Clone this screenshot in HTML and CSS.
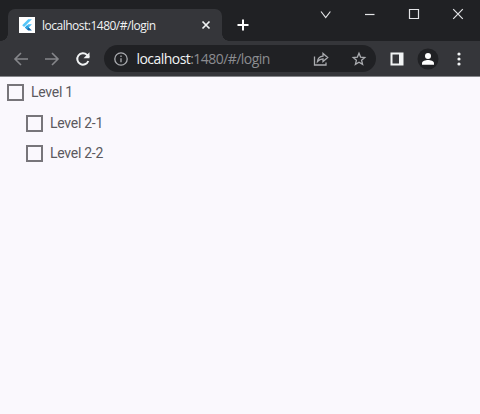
FILE: index.html
```html
<!DOCTYPE html>
<html lang="en">
<head>
<meta charset="utf-8">
<title>localhost:1480/#/login</title>
<link rel="stylesheet" href="styles.css">
</head>
<body>
<header class="titlebar">
  <div class="tab">
    <svg class="favicon" viewBox="0 0 16 16"><path fill="#fff" d="M0 0h16v16H0z"/><path fill="#54c5f8" d="M9.200 2.300h3.700L5.100 10.100 3.200 8.200z"/><path fill="#45bdf4" d="M9.200 7.200h3.700L9.700 10.400 7.900 8.600z"/><path fill="#1769aa" d="M6 10.400l1.900-1.900 5 5H9.200z"/><path fill="#29a8ea" d="M6 10.400l1.900-1.900 1.900 1.900-1.900 1.900z"/></svg>
    <span class="tab-title">localhost:1480/#/login</span>
    <svg class="tab-close" viewBox="0 0 10 10"><path d="M1.500 1.500l7 7m0-7l-7 7"/></svg>
  </div>
  <svg class="new-tab" viewBox="0 0 12 12"><path d="M6 .5v11M.5 6h11"/></svg>
  <div class="window-controls">
    <svg viewBox="0 0 12 12"><path d="M1 3.500l4.700 6 4.700-6"/></svg>
    <svg viewBox="0 0 12 12"><path d="M1 6.500h9.500"/></svg>
    <svg viewBox="0 0 12 12"><path d="M1.500 1.500h9v9h-9z"/></svg>
    <svg viewBox="0 0 12 12"><path d="M1.200 1.200l9.600 9.600m0-9.600l-9.600 9.600"/></svg>
  </div>
</header>
<nav class="toolbar">
  <div class="navigation">
    <svg class="dim" viewBox="0 0 16 16"><path d="M15 8H2m6-6L2 8l6 6"/></svg>
    <svg class="dim" viewBox="0 0 16 16"><path d="M1 8h13M8 2l6 6-6 6"/></svg>
    <svg class="reload" viewBox="0 0 16 16"><path d="M13.300 10A5.700 5.700 0 1 1 12 3.900L14 6"/><path class="solid" d="M14.500 1.200v6H8.500z"/></svg>
  </div>
  <div class="address">
    <svg class="info" viewBox="0 0 16 16"><circle cx="8" cy="8" r="6.200"/><path d="M8 7.200v4M8 4.500v1.600"/></svg>
    <span class="url"><b>localhost</b>:1480/#/login</span>
    <svg class="share" viewBox="0 0 16 16"><path d="M1.500 5.500v8.500h11.500v-2.500M4.500 10.500c.4-3.300 2-5 5.500-5.300V2.500l4.700 4-4.700 4V7.900C7.500 8 6 8.800 4.500 10.500z"/></svg>
    <svg class="star" viewBox="0 0 16 16"><path d="M8 2.200l1.600 3.900 4.200.4-3.200 2.800 1 4.100L8 11.200l-3.600 2.200 1-4.100-3.200-2.800 4.200-.4z"/></svg>
  </div>
  <svg class="panel" viewBox="0 0 14 14"><path fill="#f1f3f4" fill-rule="evenodd" d="M.5.500h13v13H.5zM2.500 2.500v9H9v-9z"/></svg>
  <svg class="avatar" viewBox="0 0 22 22"><circle cx="11" cy="11" r="10.500" fill="#202124"/><circle cx="11" cy="8" r="3" fill="#fff"/><path fill="#fff" d="M5 16.800v-1.500c0-2.200 3.500-3.300 6-3.300s6 1.100 6 3.300v1.500z"/></svg>
  <svg class="menu" viewBox="0 0 4 16"><circle cx="2" cy="3" r="1.600"/><circle cx="2" cy="8" r="1.600"/><circle cx="2" cy="13" r="1.600"/></svg>
</nav>
<main class="tree">
  <label class="node"><span class="box"></span>Level 1</label>
  <label class="node child"><span class="box"></span>Level 2-1</label>
  <label class="node child"><span class="box"></span>Level 2-2</label>
</main>
</body>
</html>
```
FILE: styles.css
```css
* { box-sizing: border-box; }
body {
  margin: 0;
  height: 414px;
  overflow: hidden;
  background: #faf8fd;
  font-family: "Open Sans", "Noto Sans", sans-serif;
}
svg { display: block; flex: none; fill: none; stroke: none; }
.titlebar {
  display: flex;
  height: 41px;
  padding-left: 8px;
  background: #202124;
}
.tab {
  position: relative;
  display: flex;
  align-items: center;
  width: 214px;
  height: 32px;
  margin-top: 9px;
  padding: 0 11px;
  border-radius: 7px 7px 0 0;
  background: #35363a;
}
.tab::before, .tab::after {
  content: "";
  position: absolute;
  bottom: 0;
  width: 7px;
  height: 7px;
}
.tab::before { left: -7px; background: radial-gradient(circle at 0 0, #202124 6.500px, #35363a 7px); }
.tab::after { right: -7px; background: radial-gradient(circle at 100% 0, #202124 6.500px, #35363a 7px); }
.favicon { width: 16px; height: 16px; }
.tab-title {
  flex: 1;
  margin-left: 7px;
  color: #f1f3f4;
  font-size: 12px;
  font-weight: 500;
  letter-spacing: -.5px;
  white-space: nowrap;
}
.tab-close { width: 10px; height: 10px; stroke: #f1f3f4; stroke-width: 1.700; }
.new-tab { width: 12px; height: 12px; margin: 19px 0 0 15px; stroke: #fff; stroke-width: 2; }
.window-controls {
  display: flex;
  gap: 32px;
  margin: 8px 16px 0 auto;
}
.window-controls svg { width: 12px; height: 12px; stroke: #e4e5e7; stroke-width: 1.200; }
.toolbar {
  display: flex;
  align-items: center;
  height: 36px;
  padding-left: 13px;
  border-bottom: 1px solid #85868a;
  background: #35363a;
}
.navigation { display: flex; gap: 15px; }
.navigation svg { width: 16px; height: 16px; stroke: #f1f3f4; }
.navigation .dim { stroke: #85868a; stroke-width: 1.600; }
.navigation .reload { stroke-width: 2; }
.navigation .solid { fill: #f1f3f4; stroke: none; }
.address {
  display: flex;
  align-items: center;
  width: 272px;
  height: 27px;
  margin-left: 13px;
  padding: 0 9px;
  border-radius: 14px;
  background: #202124;
}
.address svg { width: 16px; height: 16px; stroke: #aaacb0; stroke-width: 1.300; }
.url {
  flex: 1;
  margin-left: 7.500px;
  color: #8b8c90;
  font-size: 14px;
  letter-spacing: -.55px;
  white-space: nowrap;
}
.url b { color: #f1f3f4; font-weight: 500; }
.star { margin-left: 22px; }
.panel { width: 14px; height: 14px; margin-left: 14px; }
.avatar { width: 22px; height: 22px; margin-left: 13px; }
.menu { width: 4px; height: 16px; margin-left: 18px; fill: #f1f3f4; }
.tree {
  padding: 0 7px;
  color: #5b595e;
  font: 14px/31px Roboto, sans-serif;
  letter-spacing: -.27px;
}
.node { display: flex; align-items: center; height: 30.700px; }
.child { margin-left: 19px; }
.box { width: 17px; height: 17px; margin-right: 7px; border: 2px solid #77757a; }
```
